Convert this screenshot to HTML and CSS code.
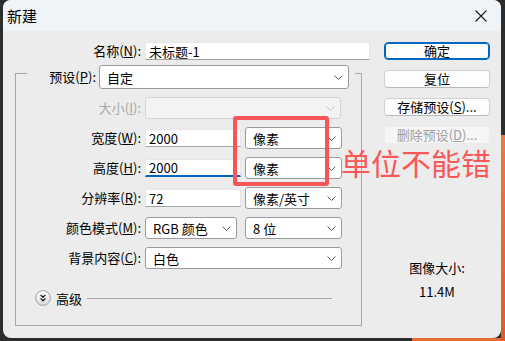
FILE: index.html
```html
<!DOCTYPE html>
<html lang="zh-CN">
<head>
    <meta charset="UTF-8">
    <meta name="viewport" content="width=device-width, initial-scale=1.0">
    <title>新建</title>
    <link rel="stylesheet" href="styles.css">
</head>
<body>
    <div class="dialog">
        <div class="titlebar">
            <span class="title">新建</span>
            <svg class="close" width="12" height="12" viewBox="0 0 12 12">
                <path d="M0.5 0.5 L11.5 11.5 M11.5 0.5 L0.5 11.5" stroke="#1b1b1b" stroke-width="1.1" fill="none"/>
            </svg>
        </div>

        <div class="dialog-body">
            <div class="form-col">
                <div class="name-row">
                    <label class="label">名称(<u>N</u>):</label>
                    <input class="textbox" type="text" value="未标题-1">
                </div>

                <div class="group">
                    <div class="group-head">
                        <label class="label head-label">预设(<u>P</u>):</label>
                        <div class="combo combo-preset">
                            <span>自定</span>
                            <svg class="chev" width="9" height="5" viewBox="0 0 9 5"><path d="M0.5 0.5 L4.5 4.5 L8.5 0.5"/></svg>
                        </div>
                    </div>

                    <div class="fields">
                        <label class="label disabled">大小(<u>I</u>):</label>
                        <div class="combo combo-disabled span2">
                            <span></span>
                            <svg class="chev" width="9" height="5" viewBox="0 0 9 5"><path d="M0.5 0.5 L4.5 4.5 L8.5 0.5"/></svg>
                        </div>

                        <label class="label">宽度(<u>W</u>):</label>
                        <input class="textbox" type="text" value="2000">
                        <div class="combo">
                            <span>像素</span>
                            <svg class="chev" width="9" height="5" viewBox="0 0 9 5"><path d="M0.5 0.5 L4.5 4.5 L8.5 0.5"/></svg>
                        </div>

                        <label class="label">高度(<u>H</u>):</label>
                        <input class="textbox focused" type="text" value="2000">
                        <div class="combo">
                            <span>像素</span>
                            <svg class="chev" width="9" height="5" viewBox="0 0 9 5"><path d="M0.5 0.5 L4.5 4.5 L8.5 0.5"/></svg>
                        </div>

                        <label class="label">分辨率(<u>R</u>):</label>
                        <input class="textbox" type="text" value="72">
                        <div class="combo">
                            <span>像素/英寸</span>
                            <svg class="chev" width="9" height="5" viewBox="0 0 9 5"><path d="M0.5 0.5 L4.5 4.5 L8.5 0.5"/></svg>
                        </div>

                        <label class="label">颜色模式(<u>M</u>):</label>
                        <div class="combo combo-narrow">
                            <span>RGB 颜色</span>
                            <svg class="chev" width="9" height="5" viewBox="0 0 9 5"><path d="M0.5 0.5 L4.5 4.5 L8.5 0.5"/></svg>
                        </div>
                        <div class="combo">
                            <span>8 位</span>
                            <svg class="chev" width="9" height="5" viewBox="0 0 9 5"><path d="M0.5 0.5 L4.5 4.5 L8.5 0.5"/></svg>
                        </div>

                        <label class="label">背景内容(<u>C</u>):</label>
                        <div class="combo span2">
                            <span>白色</span>
                            <svg class="chev" width="9" height="5" viewBox="0 0 9 5"><path d="M0.5 0.5 L4.5 4.5 L8.5 0.5"/></svg>
                        </div>
                    </div>

                    <div class="advanced">
                        <svg class="adv-toggle" width="16" height="16" viewBox="0 0 16 16">
                            <defs>
                                <linearGradient id="advFill" x1="0" y1="0" x2="0" y2="1">
                                    <stop offset="0" stop-color="#ffffff"/>
                                    <stop offset="1" stop-color="#d9d9d9"/>
                                </linearGradient>
                            </defs>
                            <circle cx="8" cy="8" r="7.4" fill="url(#advFill)" stroke="#a2a2a2"/>
                            <path d="M5.6 4.9 L8 7.3 L10.4 4.9 M5.6 8.4 L8 10.8 L10.4 8.4" fill="none" stroke="#1e1e1e" stroke-width="1.3"/>
                        </svg>
                        <span>高级</span>
                        <div class="adv-line"></div>
                    </div>
                </div>
            </div>

            <div class="side">
                <button class="button default">确定</button>
                <button class="button">复位</button>
                <button class="button">存储预设(<u>S</u>)...</button>
                <button class="button" disabled>删除预设(<u>D</u>)...</button>

                <div class="image-size">
                    <span>图像大小:</span>
                    <span>11.4M</span>
                </div>
            </div>
        </div>

        <!-- annotation drawn over the screenshot -->
        <div class="mark-box"></div>
        <div class="mark-text">单位不能错</div>
    </div>
</body>
</html>
```

FILE: styles.css
```css
* {
    box-sizing: border-box;
}
body {
    margin: 0;
    height: 341px;
    overflow: hidden;
    font-family: "Noto Sans CJK SC", sans-serif;
    font-size: 13px;
    color: #000;
    background:
        linear-gradient(#ee7843, #e4582b) 501px 135px / 4px 206px no-repeat,
        linear-gradient(#e96a36, #e96a36) 412px 338px / 93px 3px no-repeat,
        #2d2d2d;
}
.dialog {
    position: relative;
    width: 498px;
    height: 338px;
    margin-left: 3px;
    background: #ececec;
    border-radius: 8px;
    overflow: hidden;
}
.titlebar {
    height: 31px;
    background: #eff4f9;
    display: flex;
    align-items: center;
    justify-content: space-between;
    padding: 0 14px 0 4px;
}
.title {
    font-size: 15px;
}
.dialog-body {
    display: flex;
    gap: 14px;
    height: 307px;
    padding: 0 11px 0 12px;
}
.form-col {
    width: 355px;
}
.label {
    text-align: right;
    white-space: nowrap;
    line-height: 16px;
}
.label.disabled {
    color: #a6a6a6;
}
.name-row {
    display: grid;
    grid-template-columns: 126px 1fr;
    column-gap: 4px;
    align-items: center;
    height: 18px;
    margin-top: 11px;
}
.textbox {
    width: 100%;
    height: 18px;
    margin: 0;
    padding: 0 3px;
    font: inherit;
    color: #000;
    background: #fff;
    border: 1px solid #e6e6e6;
    border-bottom-color: #a3a3a3;
    outline: none;
}
.textbox.focused {
    border-bottom: 2px solid #0067c0;
}
.group {
    width: 347px;
    margin-top: 13px;
    border: 1px solid #a8a8a8;
    padding-bottom: 19px;
}
.group-head {
    display: flex;
    align-items: center;
    gap: 3px;
    width: 328px;
    margin: -9px 0 0 11px;
    padding-right: 6px;
    background: #ececec;
}
.head-label {
    width: 69px;
}
.combo {
    height: 22px;
    display: flex;
    align-items: center;
    justify-content: space-between;
    padding: 0 5px 0 7px;
    background: #fff;
    border: 1px solid #9b9b9b;
    border-radius: 3px;
    white-space: nowrap;
}
.combo-preset {
    width: 250px;
    height: 24px;
}
.combo-narrow {
    width: 92px;
}
.combo-disabled {
    width: 196px;
    background: #f3f3f3;
    border-color: #d4d4d4;
}
.chev {
    flex: none;
}
.chev path {
    fill: none;
    stroke: #5c5c5c;
    stroke-width: 1;
}
.combo-disabled .chev path {
    stroke: #c4c4c4;
}
.fields {
    display: grid;
    grid-template-columns: 125px 96px 97px;
    grid-auto-rows: 22px;
    gap: 8px 4px;
    align-items: center;
    margin-top: 8px;
}
.span2 {
    grid-column: span 2;
}
.advanced {
    display: flex;
    align-items: center;
    gap: 5px;
    height: 16px;
    margin: 21px 29px 0 19px;
}
.adv-toggle {
    flex: none;
}
.adv-line {
    flex: 1;
    height: 1px;
    background: #a8a8a8;
}
.side {
    width: 106px;
    display: flex;
    flex-direction: column;
    gap: 10px;
    padding: 11px 0 38px;
}
.button {
    height: 18px;
    margin: 0;
    padding: 0;
    font: inherit;
    line-height: 16px;
    color: #000;
    text-align: center;
    background: #fdfdfd;
    border: 1px solid #d1d1d1;
    border-bottom-color: #b9b9b9;
    border-radius: 4px;
}
.button.default {
    border-color: #0067c0;
    box-shadow: inset 0 0 0 1px #0067c0;
}
.button:disabled {
    color: #a0a0a0;
    background: #f6f6f6;
    border-color: #ebebeb;
}
.image-size {
    margin-top: auto;
    display: flex;
    flex-direction: column;
    gap: 8px;
    text-align: center;
    line-height: 16px;
}
.mark-box {
    position: absolute;
    left: 230px;
    top: 116px;
    width: 96px;
    height: 70px;
    border: 4px solid #f55656;
    border-radius: 3px;
}
.mark-text {
    position: absolute;
    left: 338px;
    top: 147px;
    font-size: 30px;
    line-height: 30px;
    color: #fa5858;
    white-space: nowrap;
}
```
